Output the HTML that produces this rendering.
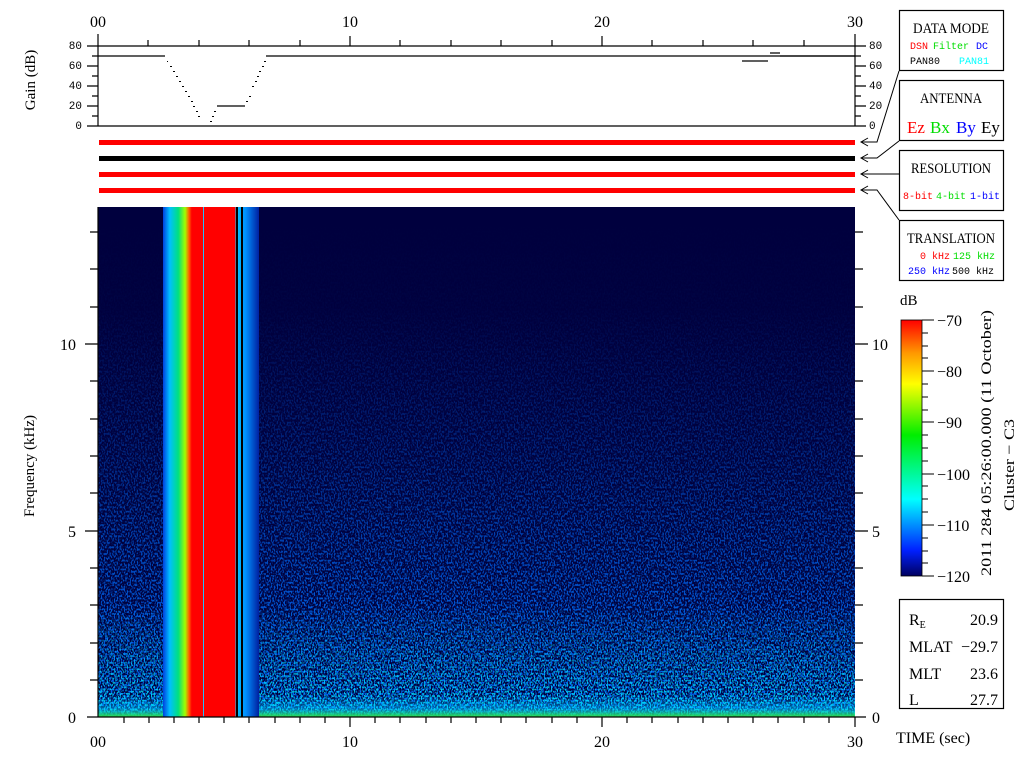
<!DOCTYPE html>
<html><head><meta charset="utf-8"><style>
html,body{margin:0;padding:0;background:#fff;width:1024px;height:768px;overflow:hidden}
svg text{font-family:"Liberation Serif",serif}
svg text.m{font-family:"Liberation Mono",monospace}
</style></head><body>
<svg width="1024" height="768" viewBox="0 0 1024 768" xmlns="http://www.w3.org/2000/svg">
<defs>
<filter id="nz" x="0" y="0" width="100%" height="100%">
<feTurbulence type="fractalNoise" baseFrequency="0.7 0.45" numOctaves="1" seed="3" result="t"/>
<feColorMatrix in="t" type="matrix" values="0 0 0 0 0  0 0 0 0 0.15  0 0 0 0 1  0 0 0 7 -3.3"/>
</filter>
<filter id="nz2" x="0" y="0" width="100%" height="100%">
<feTurbulence type="fractalNoise" baseFrequency="0.7 0.45" numOctaves="1" seed="7" result="t"/>
<feColorMatrix in="t" type="matrix" values="0 0 0 0 0  0 0 0 0 0.8  0 0 0 0 1  0 0 0 9 -4.6"/>
</filter>
<linearGradient id="fade" x1="0" y1="0" x2="0" y2="1">
<stop offset="0" stop-color="#fff" stop-opacity="0"/>
<stop offset="0.2" stop-color="#fff" stop-opacity="0.03"/>
<stop offset="0.5" stop-color="#fff" stop-opacity="0.35"/>
<stop offset="0.8" stop-color="#fff" stop-opacity="0.8"/>
<stop offset="1" stop-color="#fff" stop-opacity="1"/>
</linearGradient>
<mask id="mk"><rect x="98" y="207" width="757" height="510" fill="url(#fade)"/></mask>
<linearGradient id="fade2" x1="0" y1="0" x2="0" y2="1">
<stop offset="0" stop-color="#fff" stop-opacity="0"/>
<stop offset="0.78" stop-color="#fff" stop-opacity="0.05"/>
<stop offset="1" stop-color="#fff" stop-opacity="1"/>
</linearGradient>
<mask id="mk2"><rect x="98" y="207" width="757" height="510" fill="url(#fade2)"/></mask>
<linearGradient id="cb" x1="0" y1="1" x2="0" y2="0">
<stop offset="0" stop-color="#000060"/>
<stop offset="0.1" stop-color="#0020ff"/>
<stop offset="0.3" stop-color="#00ffff"/>
<stop offset="0.55" stop-color="#00ee00"/>
<stop offset="0.75" stop-color="#ffff00"/>
<stop offset="0.87" stop-color="#ff9900"/>
<stop offset="1" stop-color="#ff0000"/>
</linearGradient>
<linearGradient id="burst" x1="0" y1="0" x2="1" y2="0">
<stop offset="0" stop-color="#0040e0"/>
<stop offset="0.07" stop-color="#00c0ff"/>
<stop offset="0.16" stop-color="#00e080"/>
<stop offset="0.23" stop-color="#a0ff00"/>
<stop offset="0.27" stop-color="#ff6000"/>
<stop offset="0.3" stop-color="#ff0000"/>
<stop offset="0.75" stop-color="#ff0000"/>
<stop offset="0.76" stop-color="#00c8ff"/>
<stop offset="0.86" stop-color="#0090ff"/>
<stop offset="1" stop-color="#0020a0"/>
</linearGradient>
<linearGradient id="gb" x1="0" y1="0" x2="0" y2="1">
<stop offset="0" stop-color="#00c0ff" stop-opacity="0"/>
<stop offset="0.6" stop-color="#00c0ff" stop-opacity="0.5"/>
<stop offset="1" stop-color="#30e040"/>
</linearGradient>
</defs>

<rect x="98" y="207" width="757" height="510" fill="#00003e"/>
<rect x="98" y="207" width="757" height="510" filter="url(#nz)" mask="url(#mk)"/>
<rect x="98" y="207" width="757" height="510" filter="url(#nz2)" mask="url(#mk2)"/>
<rect x="98" y="695" width="757" height="22" fill="url(#gb)"/>
<rect x="163" y="207" width="96" height="510" fill="url(#burst)"/>
<rect x="236" y="207" width="2" height="510" fill="#000"/>
<rect x="241" y="207" width="2" height="510" fill="#000"/>
<rect x="203" y="207" width="1" height="510" fill="#20c0ff"/>

<g stroke="#000" stroke-width="1.2" fill="none">
<line x1="98" y1="34" x2="98" y2="126"/>
<line x1="855" y1="34" x2="855" y2="126"/>
<line x1="87" y1="46" x2="866" y2="46"/>
<line x1="87" y1="126" x2="866" y2="126"/>
<path d="M148 46V40M199 46V40M249 46V40M300 46V40M400 46V40M451 46V40M501 46V40M552 46V40M652 46V40M703 46V40M753 46V40M804 46V40M350 46V36M602 46V36"/>
<path d="M87 66H98M87 86H98M87 106H98M92 56H98M92 76H98M92 96H98M92 116H98"/>
<path d="M855 66H866M855 86H866M855 106H866M855 56H861M855 76H861M855 96H861M855 116H861"/>
<path d="M98 56H165M266 56H855" />
<path d="M217 106H245" />
<path d="M742 61H768M770 53H780M780 56H855" />
</g>
<g fill="#000">
<rect x="167" y="61" width="1" height="1"/><rect x="170" y="66" width="2" height="1"/><rect x="173" y="71" width="2" height="1"/><rect x="176" y="76" width="2" height="1"/><rect x="179" y="81" width="2" height="1"/><rect x="182" y="86" width="2" height="1"/><rect x="185" y="91" width="2" height="1"/><rect x="188" y="96" width="2" height="1"/><rect x="191" y="101" width="2" height="1"/><rect x="193" y="106" width="2" height="1"/><rect x="196" y="111" width="2" height="1"/><rect x="198" y="116" width="2" height="1"/><rect x="210" y="121" width="2" height="1"/><rect x="212" y="116" width="2" height="1"/><rect x="214" y="111" width="2" height="1"/>
<rect x="246" y="101" width="2" height="1"/><rect x="249" y="96" width="2" height="1"/><rect x="252" y="86" width="2" height="1"/><rect x="255" y="81" width="2" height="1"/><rect x="257" y="76" width="2" height="1"/><rect x="259" y="71" width="2" height="1"/><rect x="262" y="66" width="2" height="1"/><rect x="264" y="61" width="2" height="1"/>
</g>
<g font-size="11" fill="#000">
<text class="m" x="82" y="49" text-anchor="end">80</text>
<text class="m" x="82" y="69" text-anchor="end">60</text>
<text class="m" x="82" y="89" text-anchor="end">40</text>
<text class="m" x="82" y="109" text-anchor="end">20</text>
<text class="m" x="82" y="129" text-anchor="end">0</text>
<text class="m" x="869" y="49">80</text>
<text class="m" x="869" y="69">60</text>
<text class="m" x="869" y="89">40</text>
<text class="m" x="869" y="109">20</text>
<text class="m" x="869" y="129">0</text>
</g>
<text transform="translate(35,80) rotate(-90)" text-anchor="middle" font-size="15">Gain (dB)</text>

<rect x="99" y="140" width="756" height="5" fill="#f00"/>
<rect x="99" y="156" width="756" height="5" fill="#000"/>
<rect x="99" y="172" width="756" height="5" fill="#f00"/>
<rect x="99" y="188" width="756" height="5" fill="#f00"/>

<g font-size="16" text-anchor="middle">
<text x="98" y="27">00</text><text x="350" y="27">10</text><text x="602" y="27">20</text><text x="855" y="27">30</text>
<text x="98" y="747">00</text><text x="350" y="747">10</text><text x="602" y="747">20</text><text x="855" y="747">30</text>
</g>

<g stroke="#000" stroke-width="1.2" fill="none">
<line x1="87" y1="717" x2="866" y2="717"/>
<line x1="98" y1="207" x2="98" y2="717"/>
<path d="M124 717v6M149 717v6M174 717v6M199 717v6M224 717v6M249 717v6M275 717v6M300 717v6M325 717v6M350 717v10M375 717v6M400 717v6M426 717v6M451 717v6M476 717v6M501 717v6M526 717v6M552 717v6M577 717v6M602 717v10M627 717v6M652 717v6M678 717v6M703 717v6M728 717v6M753 717v6M778 717v6M804 717v6M829 717v6M855 717v10"/>
<path d="M90 680H98M90 643H98M90 605H98M90 568H98M85 531H98M90 493H98M90 456H98M90 419H98M90 381H98M85 344H98M90 307H98M90 269H98M90 232H98"/>
<path d="M855 680H863M855 643H863M855 605H863M855 568H863M855 531H868M855 493H863M855 456H863M855 419H863M855 381H863M855 344H868M855 307H863M855 269H863M855 232H863"/>
</g>
<g font-size="16">
<text x="76" y="723" text-anchor="end">0</text>
<text x="76" y="537" text-anchor="end">5</text>
<text x="76" y="350" text-anchor="end">10</text>
<text x="872" y="723">0</text>
<text x="872" y="537">5</text>
<text x="872" y="350">10</text>
</g>
<text transform="translate(34,466) rotate(-90)" text-anchor="middle" font-size="15">Frequency (kHz)</text>

<g fill="#fff" stroke="#000" stroke-width="1.2">
<rect x="899.5" y="10.5" width="104" height="60"/>
<rect x="899.5" y="80.5" width="104" height="60"/>
<rect x="899.5" y="150.5" width="104" height="60"/>
<rect x="899.5" y="220.5" width="104" height="60"/>
<rect x="899.5" y="599.5" width="104" height="109"/>
</g>
<g stroke="#000" stroke-width="1" fill="none">
<path d="M899 71L877 142H861M868 138L861 142L868 146"/>
<path d="M899 141L877 158H861M868 154L861 158L868 162"/>
<path d="M899 174H861M868 170L861 174L868 178"/>
<path d="M899 220L877 190H861M868 186L861 190L868 194"/>
</g>
<g font-size="15" text-anchor="middle">
<text x="951" y="33" textLength="76" lengthAdjust="spacingAndGlyphs">DATA MODE</text>
<text x="951" y="103" textLength="62" lengthAdjust="spacingAndGlyphs">ANTENNA</text>
<text x="951" y="173" textLength="80" lengthAdjust="spacingAndGlyphs">RESOLUTION</text>
<text x="951" y="243" textLength="88" lengthAdjust="spacingAndGlyphs">TRANSLATION</text>
</g>
<g font-size="10">
<text class="m" x="910" y="49" fill="#f00">DSN</text>
<text class="m" x="933" y="49" fill="#00dd00">Filter</text>
<text class="m" x="976" y="49" fill="#00f">DC</text>
<text class="m" x="910" y="64" fill="#000">PAN80</text>
<text class="m" x="959" y="64" fill="#0ff">PAN81</text>
<text class="m" x="903" y="199" fill="#f00">8-bit</text>
<text class="m" x="936" y="199" fill="#00dd00">4-bit</text>
<text class="m" x="970" y="199" fill="#00f">1-bit</text>
<text class="m" x="920" y="259" fill="#f00">0 kHz</text>
<text class="m" x="953" y="259" fill="#00dd00">125 kHz</text>
<text class="m" x="908" y="274" fill="#00f">250 kHz</text>
<text class="m" x="952" y="274" fill="#000">500 kHz</text>
</g>
<g font-size="17">
<text x="907" y="133" fill="#f00">Ez</text>
<text x="930" y="133" fill="#00dd00">Bx</text>
<text x="956" y="133" fill="#00f">By</text>
<text x="981" y="133" fill="#000">Ey</text>
</g>

<text x="900" y="305" font-size="15">dB</text>
<rect x="901" y="320" width="21" height="256" fill="url(#cb)" stroke="#000" stroke-width="0.8"/>
<g stroke="#000" stroke-width="1">
<path d="M922 320h12M922 371h12M922 422h12M922 474h12M922 525h12M922 576h12"/>
<path d="M922 333h6M922 346h6M922 358h6M922 384h6M922 397h6M922 410h6M922 435h6M922 448h6M922 461h6M922 486h6M922 499h6M922 512h6M922 538h6M922 551h6M922 563h6"/>
</g>
<g font-size="16">
<text x="937" y="326">−70</text>
<text x="937" y="377">−80</text>
<text x="937" y="428">−90</text>
<text x="937" y="480">−100</text>
<text x="937" y="531">−110</text>
<text x="937" y="582">−120</text>
</g>
<text transform="translate(991,576) rotate(-90)" font-size="15" textLength="266" lengthAdjust="spacingAndGlyphs">2011 284 05:26:00.000 (11 October)</text>
<text transform="translate(1014,511) rotate(-90)" font-size="15" textLength="92" lengthAdjust="spacingAndGlyphs">Cluster − C3</text>

<g font-size="16">
<text x="909" y="625">R<tspan class="m" font-size="10" dy="3">E</tspan></text>
<text x="909" y="652">MLAT</text>
<text x="909" y="679">MLT</text>
<text x="909" y="705">L</text>
<text x="998" y="625" text-anchor="end">20.9</text>
<text x="998" y="652" text-anchor="end">−29.7</text>
<text x="998" y="679" text-anchor="end">23.6</text>
<text x="998" y="705" text-anchor="end">27.7</text>
</g>
<text x="896" y="743" font-size="16">TIME (sec)</text>
</svg>
</body></html>
